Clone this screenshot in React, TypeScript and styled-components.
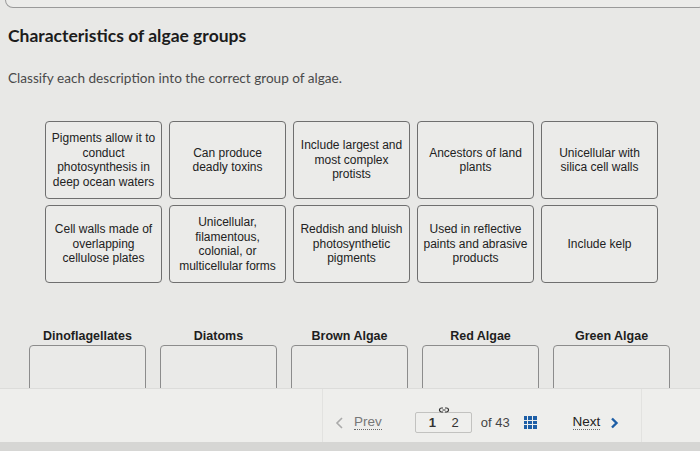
import * as React from "react";
import styled, { createGlobalStyle } from "styled-components";

const GlobalStyle = createGlobalStyle`
  html, body {
    margin: 0;
    padding: 0;
    background: #e7e7e5;
  }
`;

const Page = styled.div`
  width: 700px;
  height: 451px;
  overflow: hidden;
  background: #e8e8e6;
  font-family: "Liberation Sans", Arial, sans-serif;
  display: flex;
  flex-direction: column;
`;

const TopFrame = styled.div`
  height: 17px;
  margin: -10px -6px 0 5px;
  border: 1.5px solid #9a9a9a;
  border-top: none;
  border-radius: 0 0 8px 8px;
  background: #ececea;
`;

const Title = styled.h1`
  margin: 17px 0 0 8px;
  font-family: Lato, "Open Sans", sans-serif;
  font-size: 17.5px;
  font-weight: 700;
  color: #1c1c1c;
`;

const Subtitle = styled.p`
  margin: 24px 0 0 8px;
  font-family: Lato, "Open Sans", sans-serif;
  font-size: 13.6px;
  color: #4a4a4a;
`;

const CardGrid = styled.div`
  margin: 35px 0 0 45px;
  display: grid;
  grid-template-columns: repeat(5, 117px);
  grid-auto-rows: 78px;
  column-gap: 7px;
  row-gap: 6px;
`;

const Card = styled.div`
  border: 1.5px solid #6f6f6f;
  border-radius: 4px;
  background: #ebebe9;
  display: flex;
  align-items: center;
  justify-content: center;
  text-align: center;
  padding: 0 4px;
  font-size: 12px;
  line-height: 14.5px;
  color: #222;
`;

const Groups = styled.div`
  margin: 46px 0 0 29px;
  display: grid;
  grid-template-columns: repeat(5, 117px);
  column-gap: 14px;
`;

const Group = styled.div`
  display: flex;
  flex-direction: column;
  align-items: center;
`;

const GroupLabel = styled.div`
  font-size: 12.5px;
  font-weight: 700;
  color: #1e1e1e;
  height: 14px;
  line-height: 14px;
`;

const DropBox = styled.div`
  margin-top: 2px;
  width: 100%;
  height: 60px;
  border: 1.5px solid #8c8c8c;
  border-radius: 4px;
  background: #eaeae8;
  box-sizing: border-box;
`;

const Footer = styled.div`
  position: relative;
  height: 54px;
  margin-top: -17px;
  background: #eeeeec;
  border-top: 1px solid #dcdcda;
  display: flex;
  align-items: center;
  padding-top: 14px;
  box-sizing: border-box;
`;

const Pager = styled.div`
  margin-left: 322px;
  width: 318px;
  height: 100%;
  display: flex;
  align-items: center;
  border-left: 1px solid #e2e2e0;
  border-right: 1px solid #e2e2e0;
  margin-top: -14px;
  padding-top: 14px;
  box-sizing: content-box;
`;

const PagerLink = styled.span<{ $active?: boolean }>`
  display: flex;
  align-items: center;
  gap: 10px;
  font-size: 13.5px;
  color: ${(p) => (p.$active ? "#222" : "#777")};
`;

const Dotted = styled.span`
  border-bottom: 1px dotted #666;
  line-height: 14px;
`;

const PageBox = styled.div`
  position: relative;
  margin-left: 33px;
  width: 57px;
  height: 21px;
  border: 1px solid #c2c2c0;
  border-radius: 2px;
  background: #efefed;
  display: flex;
  align-items: center;
  justify-content: space-between;
  padding: 0 12px 0 13px;
  box-sizing: border-box;
  font-size: 13px;
  color: #333;
`;

const LinkIcon = styled.svg`
  position: absolute;
  top: -7px;
  left: 22px;
`;

const OfText = styled.span`
  margin-left: 9px;
  font-size: 13px;
  color: #444;
`;

const GridIcon = styled.div`
  margin-left: 14px;
  display: grid;
  grid-template-columns: repeat(3, 3.5px);
  grid-auto-rows: 3.5px;
  gap: 1.2px;
`;

const Dot = styled.span`
  background: #1d5ea6;
`;

const NextWrap = styled.div`
  margin-left: 36px;
`;

const BottomBand = styled.div`
  flex: 1;
  background: #d6d6d4;
`;

const cards = [
  "Pigments allow it to conduct photosynthesis in deep ocean waters",
  "Can produce deadly toxins",
  "Include largest and most complex protists",
  "Ancestors of land plants",
  "Unicellular with silica cell walls",
  "Cell walls made of overlapping cellulose plates",
  "Unicellular, filamentous, colonial, or multicellular forms",
  "Reddish and bluish photosynthetic pigments",
  "Used in reflective paints and abrasive products",
  "Include kelp",
];

const cardLines: Record<number, string[]> = {
  0: ["Pigments allow it to", "conduct", "photosynthesis in", "deep ocean waters"],
  6: ["Unicellular,", "filamentous,", "colonial, or", "multicellular forms"],
};

const groups = ["Dinoflagellates", "Diatoms", "Brown Algae", "Red Algae", "Green Algae"];

export default function App() {
  return (
    <>
      <GlobalStyle />
      <Page>
        <TopFrame />
        <Title>Characteristics of algae groups</Title>
        <Subtitle>Classify each description into the correct group of algae.</Subtitle>
        <CardGrid>
          {cards.map((c, i) => (
            <Card key={i}>
              {cardLines[i] ? (
                <div>
                  {cardLines[i].map((l) => (
                    <div key={l}>{l}</div>
                  ))}
                </div>
              ) : (
                c
              )}
            </Card>
          ))}
        </CardGrid>
        <Groups>
          {groups.map((g) => (
            <Group key={g}>
              <GroupLabel>{g}</GroupLabel>
              <DropBox />
            </Group>
          ))}
        </Groups>
        <Footer>
          <Pager>
            <PagerLink style={{ marginLeft: 12 }}>
              <svg width="9" height="12" viewBox="0 0 9 12">
                <path d="M7 1 L2 6 L7 11" fill="none" stroke="#aaa" strokeWidth="1.6" />
              </svg>
              <Dotted>Prev</Dotted>
            </PagerLink>
            <PageBox>
              <LinkIcon width="12" height="8" viewBox="0 0 12 8">
                <path
                  d="M5 2 H3.5 A2 2 0 0 0 3.5 6 H5 M7 2 H8.5 A2 2 0 0 1 8.5 6 H7 M4.5 4 H7.5"
                  fill="none"
                  stroke="#333"
                  strokeWidth="1.2"
                />
              </LinkIcon>
              <b>1</b>
              <span>2</span>
            </PageBox>
            <OfText>of 43</OfText>
            <GridIcon>
              {Array.from({ length: 9 }).map((_, i) => (
                <Dot key={i} />
              ))}
            </GridIcon>
            <NextWrap>
              <PagerLink $active>
                <Dotted>Next</Dotted>
                <svg width="9" height="12" viewBox="0 0 9 12">
                  <path d="M2 1.5 L6.5 6 L2 10.5" fill="none" stroke="#1d5ea6" strokeWidth="2.4" />
                </svg>
              </PagerLink>
            </NextWrap>
          </Pager>
        </Footer>
        <BottomBand />
      </Page>
    </>
  );
}
